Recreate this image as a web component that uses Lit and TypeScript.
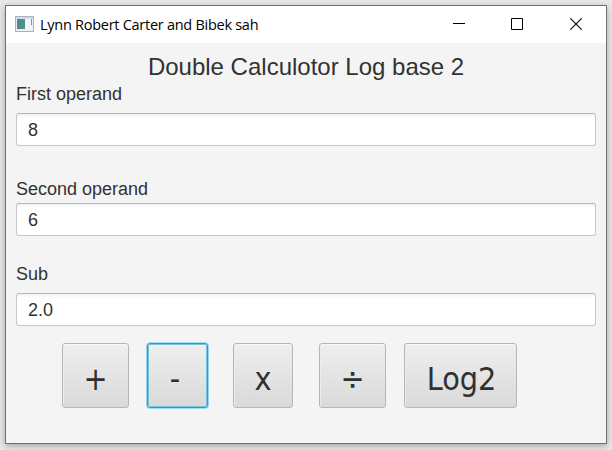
import { LitElement, html, css } from "lit";
import { customElement, property } from "lit/decorators.js";

@customElement("title-bar")
class TitleBar extends LitElement {
  static styles = css`
    :host { display: flex; height: 37px; background: #fff; align-items: center; }
    .logo { margin-left: 9px; margin-top: -1px; }
    .name { margin-left: 6px; flex: 1; font: 14.5px/20px "Open Sans", "Noto Sans", sans-serif; letter-spacing: -0.27px; color: #000; white-space: nowrap; }
    .controls { display: block; }
  `;
  render() {
    return html`
      <svg class="logo" width="19" height="16" viewBox="0 0 19 16">
        <rect x="0.5" y="0.5" width="18" height="15" fill="#eceff4" stroke="#a9b4c2" />
        <rect x="1" y="1" width="17" height="2" fill="#d3dbe4" />
        <rect x="2" y="3" width="8" height="10" fill="#4d9488" />
        <rect x="2" y="3" width="3" height="10" fill="#4a7d98" opacity=".5" />
        <rect x="11" y="3" width="6" height="11" fill="#f4f5f7" />
        <rect x="16" y="3" width="1" height="6" fill="#8d939b" />
      </svg>
      <span class="name">Lynn Robert Carter and Bibek sah</span>
      <svg class="controls" width="156" height="37" viewBox="450 6 156 37" fill="none" stroke="#000">
        <path d="M453 23.5h12M511.5 18.5h11v11h-11z" />
        <path d="M570.3 18.3l11.4 11.4M581.7 18.3l-11.4 11.4" stroke-width="1.1" />
      </svg>
    `;
  }
}

@customElement("value-field")
class ValueField extends LitElement {
  @property() label = "";
  @property() value = "";
  static styles = css`
    :host { display: block; font: 18px/20px "Liberation Sans", Arial, sans-serif; color: #323232; }
    .label { height: 20px; margin-bottom: var(--label-gap, 9px); white-space: nowrap; }
    .box { box-sizing: border-box; height: 33px; border: 1px solid #c6c6c6; border-top-color: #b5b5b5; border-radius: 3px; background: linear-gradient(#f3f3f3, #fff 4px); padding: 6px 11px; }
  `;
  render() {
    return html`<div class="label">${this.label}</div><div class="box">${this.value}</div>`;
  }
}

@customElement("app-root")
class AppRoot extends LitElement {
  static styles = css`
    :host { display: block; box-sizing: border-box; width: 612px; height: 450px; padding: 5px; background: #e9e9e9; overflow: hidden; }
    .window { box-sizing: border-box; width: 602px; height: 439px; border: 1px solid #707070; background: #f4f4f4; box-shadow: 0 2px 7px rgba(0, 0, 0, .3); }
    .body { padding: 9px 10px 0; }
    .heading { font: 24px/30px "Liberation Sans", Arial, sans-serif; color: #323232; text-align: center; white-space: nowrap; }
    .fields { display: flex; flex-direction: column; margin-top: 2px; }
    .second { margin-top: 33px; --label-gap: 4px; }
    .result { margin-top: 28px; }
    .buttons { display: flex; padding-left: 46px; margin-top: 17px; }
    .key { box-sizing: border-box; height: 65px; border: 1px solid #b6b6b6; border-radius: 3px; background: linear-gradient(#efefef, #d9d9d9); box-shadow: inset 0 1px #f8f8f8, inset 1px 0 #ececec; font: 32px/38px "DejaVu Sans Condensed", "DejaVu Sans", sans-serif; color: #303030; text-align: center; padding: 7px 0 0; margin: 0; white-space: nowrap; }
    .plus { width: 67px; margin-right: 18px; }
    .minus { width: 61px; margin-right: 25px; border-color: #2f9dc0; box-shadow: 0 0 0 .6px #5cbfe0, inset 0 0 0 1px #74c5e2; padding: 7px 5px 0 0; }
    .times { width: 60px; margin-right: 26px; }
    .divide { width: 67px; margin-right: 18px; }
    .log { width: 113px; padding-left: 2px; }
  `;
  render() {
    return html`
      <div class="window">
        <title-bar></title-bar>
        <div class="body">
          <div class="heading">Double Calculotor Log base 2</div>
          <div class="fields">
            <value-field label="First operand" value="8"></value-field>
            <value-field class="second" label="Second operand" value="6"></value-field>
            <value-field class="result" label="Sub" value="2.0"></value-field>
          </div>
          <div class="buttons">
            <button class="key plus">+</button>
            <button class="key minus">-</button>
            <button class="key times">x</button>
            <button class="key divide">÷</button>
            <button class="key log">Log2</button>
          </div>
        </div>
      </div>
    `;
  }
}
